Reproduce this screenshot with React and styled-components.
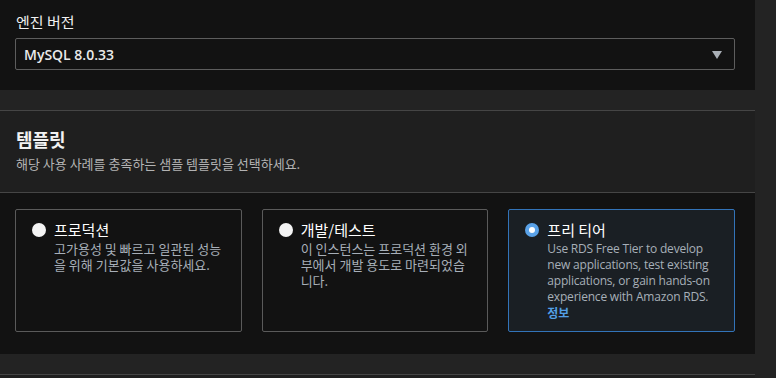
import React from "react";
import styled, { createGlobalStyle } from "styled-components";

const Global = createGlobalStyle`
  html, body { margin: 0; padding: 0; background: #232323; }
  body {
    font-family: "Open Sans", "Noto Sans CJK KR", sans-serif;
    color: #e6e6e6;
    -webkit-font-smoothing: antialiased;
  }
  * { box-sizing: border-box; }
`;

const Page = styled.div`
  width: 755px;
  display: flex;
  flex-direction: column;
  gap: 20px;
`;

const Card = styled.section`
  background: #121212;
  border-top: ${(p) => (p.$topBorder ? "1px solid #454545" : "none")};
`;

const FieldBody = styled.div`
  padding: 12px 20px 20px 15px;
`;

const Label = styled.div`
  font-family: "Noto Sans CJK KR", sans-serif;
  font-size: 15px;
  line-height: 20px;
  font-weight: 400;
  color: #f0f0f0;
  padding-left: 1px;
  margin-bottom: 6px;
`;

const Select = styled.div`
  height: 32px;
  border: 1px solid #5d5d5d;
  border-radius: 2px;
  display: flex;
  align-items: center;
  justify-content: space-between;
  padding: 0 12px 0 8px;
  font-size: 14px;
  font-weight: 600;
  color: #eaeaea;
`;

const Caret = styled.span`
  width: 0;
  height: 0;
  border-left: 5px solid transparent;
  border-right: 5px solid transparent;
  border-top: 8px solid #a9afb6;
  margin-top: 1px;
`;

const Header = styled.header`
  background: #1f1f1f;
  border-bottom: 1px solid #454545;
  padding: 16px 20px 20px 16px;
`;

const Title = styled.h2`
  margin: 0 0 4px;
  font-family: "Noto Sans CJK KR", sans-serif;
  font-size: 18px;
  line-height: 24px;
  font-weight: 700;
  color: #f2f2f2;
`;

const Desc = styled.p`
  margin: 0;
  font-family: "Noto Sans CJK KR", sans-serif;
  font-size: 13px;
  line-height: 17px;
  color: #b3b3b3;
`;

const Tiles = styled.div`
  padding: 16px 20px 22px 15px;
  display: grid;
  grid-template-columns: repeat(3, 1fr);
  gap: 20px;
`;

const Tile = styled.label`
  display: flex;
  align-items: flex-start;
  gap: 8px;
  padding: 11px 16px 10px 16px;
  border: 1px solid ${(p) => (p.$selected ? "#3273b8" : "#5a5a5a")};
  border-radius: 2px;
  background: ${(p) => (p.$selected ? "#1a1f24" : "#121212")};
  cursor: pointer;
`;

const Radio = styled.span`
  flex: none;
  width: 14px;
  height: 14px;
  margin-top: 2px;
  border-radius: 50%;
  background: ${(p) => (p.$checked ? "#5aa2e8" : "#f4f4f4")};
  display: flex;
  align-items: center;
  justify-content: center;
  &::after {
    content: "";
    display: ${(p) => (p.$checked ? "block" : "none")};
    width: 6px;
    height: 6px;
    border-radius: 50%;
    background: #ffffff;
  }
`;

const TileText = styled.div`
  display: flex;
  flex-direction: column;
  min-width: 0;
`;

const TileTitle = styled.div`
  font-family: "Noto Sans CJK KR", sans-serif;
  font-size: 15px;
  line-height: 18px;
  font-weight: 400;
  color: #ffffff;
`;

const TileDesc = styled.div`
  font-family: ${(p) =>
    p.$latin ? `"Open Sans", "Noto Sans CJK KR", sans-serif` : `"Noto Sans CJK KR", sans-serif`};
  font-size: ${(p) => (p.$latin ? "12px" : "13px")};
  letter-spacing: ${(p) => (p.$latin ? "-0.2px" : "0")};
  line-height: 16px;
  color: #a7afb8;
  margin-top: 2px;
`;

const InfoLink = styled.a`
  display: block;
  font-family: "Noto Sans CJK KR", sans-serif;
  font-size: 12px;
  line-height: 16px;
  letter-spacing: 0;
  font-weight: 700;
  color: #539fe5;
  text-decoration: none;
`;

const NextHeader = styled.div`
  background: #1f1f1f;
  height: 40px;
`;

const templates = [
  {
    id: "prod",
    title: "프로덕션",
    desc: "고가용성 및 빠르고 일관된 성능을 위해 기본값을 사용하세요.",
  },
  {
    id: "dev",
    title: "개발/테스트",
    desc: "이 인스턴스는 프로덕션 환경 외부에서 개발 용도로 마련되었습니다.",
  },
  {
    id: "free",
    title: "프리 티어",
    desc: "Use RDS Free Tier to develop new applications, test existing applications, or gain hands-on experience with Amazon RDS.",
    latin: true,
    info: true,
  },
];

export default function App() {
  const selected = "free";
  return (
    <>
      <Global />
      <Page>
        <Card>
          <FieldBody>
            <Label>엔진 버전</Label>
            <Select>
              <span>MySQL 8.0.33</span>
              <Caret />
            </Select>
          </FieldBody>
        </Card>
        <Card $topBorder>
          <Header>
            <Title>템플릿</Title>
            <Desc>해당 사용 사례를 충족하는 샘플 템플릿을 선택하세요.</Desc>
          </Header>
          <Tiles>
            {templates.map((t) => (
              <Tile key={t.id} $selected={t.id === selected}>
                <Radio $checked={t.id === selected} />
                <TileText>
                  <TileTitle>{t.title}</TileTitle>
                  <TileDesc $latin={t.latin}>
                    {t.desc}
                    {t.info && <InfoLink href="#">정보</InfoLink>}
                  </TileDesc>
                </TileText>
              </Tile>
            ))}
          </Tiles>
        </Card>
        <Card $topBorder>
          <NextHeader />
        </Card>
      </Page>
    </>
  );
}
